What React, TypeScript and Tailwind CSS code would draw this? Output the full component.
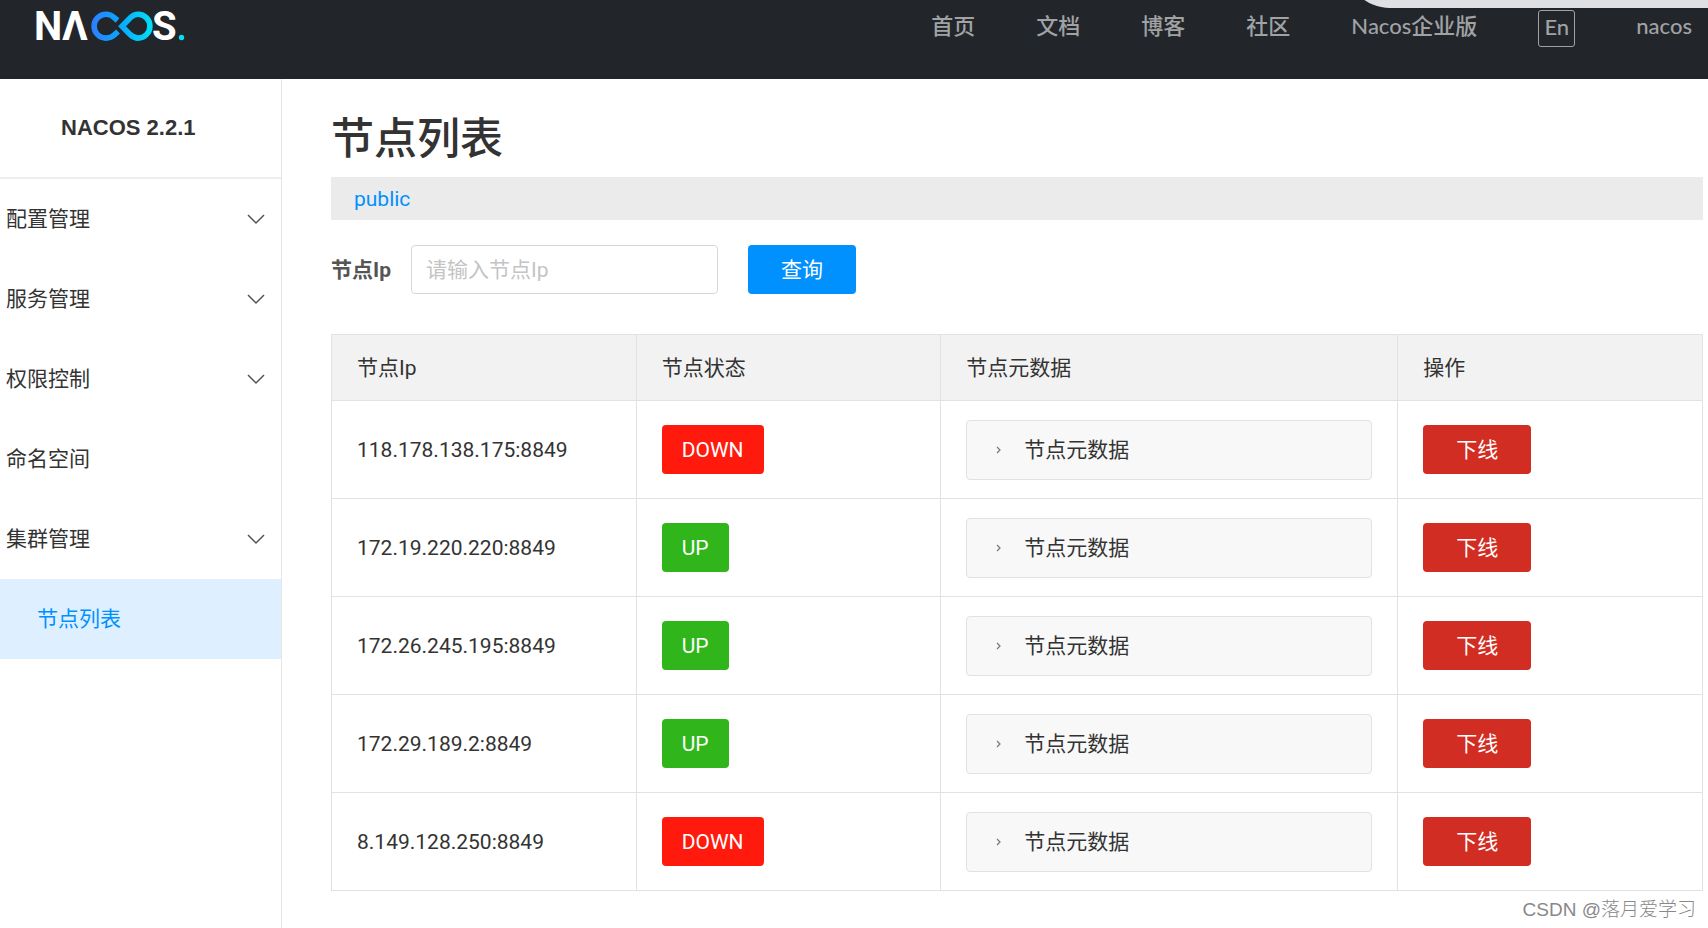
import { ReactNode, useState } from 'react'
import clsx from 'clsx'

type NodeState = 'UP' | 'DOWN'

interface ClusterNode {
	address: string
	state: NodeState
}

interface MenuItem {
	label: string
	expandable?: boolean
	children?: string[]
}

const navLinks = ['首页', '文档', '博客', '社区', 'Nacos企业版']

const menu: MenuItem[] = [
	{ label: '配置管理', expandable: true },
	{ label: '服务管理', expandable: true },
	{ label: '权限控制', expandable: true },
	{ label: '命名空间' },
	{ label: '集群管理', expandable: true, children: ['节点列表'] }
]

const nodes: ClusterNode[] = [
	{ address: '118.178.138.175:8849', state: 'DOWN' },
	{ address: '172.19.220.220:8849', state: 'UP' },
	{ address: '172.26.245.195:8849', state: 'UP' },
	{ address: '172.29.189.2:8849', state: 'UP' },
	{ address: '8.149.128.250:8849', state: 'DOWN' }
]

const Logo = () => (
	<svg width="156" height="52" viewBox="-4 -10 156 52" role="img" aria-label="Nacos">
		<defs>
			<linearGradient id="loop" gradientUnits="userSpaceOnUse" x1="55" y1="0" x2="117" y2="0">
				<stop offset="0" stopColor="#2e7dff" />
				<stop offset="0.45" stopColor="#0aa5ff" />
				<stop offset="1" stopColor="#00e1f5" />
			</linearGradient>
		</defs>
		<g fill="#fff" className="font-['Roboto',sans-serif] text-[40px] font-bold">
			<text x="-2" y="30">N</text>
			<text x="26" y="30">Λ</text>
			<text x="116" y="30">S</text>
		</g>
		<g fill="none" stroke="url(#loop)" strokeWidth="5.6">
			<path d="M81.500 10.500L78 7.500C75.500 5.200 73 4.300 70 4.300A11.900 11.900 0 0 0 70 28.100C74 28.100 76.500 26.700 78.500 24.800L82 21.500" />
			<path d="M86 16.200L94 8C97 5.200 99 4.300 102 4.300A11.900 11.900 0 0 1 102 28.100C99 28.100 97 27.200 94 24.400Z" />
		</g>
		<circle cx="145.500" cy="27.500" r="2.700" fill="#00e1f5" />
	</svg>
)

const ChevronDown = () => (
	<svg width="18" height="12" viewBox="0 0 18 12" fill="none" stroke="#555" strokeWidth="1.500">
		<path d="M1 2L9 10L17 2" />
	</svg>
)

const ChevronRight = () => (
	<svg width="6" height="8" viewBox="0 0 6 8" fill="none" stroke="#777" strokeWidth="1.200">
		<path d="M1 1L4 4L1 7" />
	</svg>
)

const Header = () => (
	<header className="relative flex h-[79px] items-start justify-between bg-[#22252a] pr-4 pl-8">
		<a href="#">
			<Logo />
		</a>
		<nav className="mt-[10px] flex items-start gap-[61px] font-['Lato','Noto_Sans_CJK_SC',sans-serif] text-[22px] leading-8 font-medium text-[#a0a2a4]">
			{navLinks.map((label) => (
				<a key={label} href="#">
					{label}
				</a>
			))}
			<button
				type="button"
				className="flex h-[37px] w-[37px] items-start justify-center rounded-[3px] border border-[#a0a2a4]"
			>
				En
			</button>
			<a href="#">nacos</a>
		</nav>
		<div className="absolute top-0 right-0 h-2 w-[363px] overflow-hidden">
			<div className="absolute bottom-0 h-12 w-full rounded-bl-[45px] bg-[#dfe0e3]" />
		</div>
	</header>
)

const Sidebar = () => (
	<aside className="w-[282px] shrink-0 border-r border-[#e6e6e6]">
		<h2 className="flex h-[100px] items-center border-b-2 border-[#eee] pl-[61px] font-['Liberation_Sans',sans-serif] text-[22px] font-bold">
			NACOS 2.2.1
		</h2>
		<ul>
			{menu.map(({ label, expandable, children }) => (
				<li key={label}>
					<button
						type="button"
						className="flex h-20 w-full items-center justify-between pr-4 pl-[6px]"
					>
						{label}
						{expandable && <ChevronDown />}
					</button>
					{children?.map((child) => (
						<a
							key={child}
							href="#"
							className="flex h-20 items-center bg-[#def0ff] pl-[37px] text-[#0091ff]"
						>
							{child}
						</a>
					))}
				</li>
			))}
		</ul>
	</aside>
)

const StateTag = ({ state }: { state: NodeState }) => (
	<span
		className={clsx(
			'inline-flex h-[49px] items-center rounded px-5 text-white',
			state === 'UP' ? 'bg-[#30b51a]' : 'bg-[#ff1a0d]'
		)}
	>
		{state}
	</span>
)

const Th = ({ className, children }: { className: string; children: ReactNode }) => (
	<th className={clsx('h-[66px] border border-[#e2e2e2] px-[25px] text-left font-normal', className)}>
		{children}
	</th>
)

const Td = ({ children }: { children: ReactNode }) => (
	<td className="h-[98px] border border-[#e2e2e2] px-[25px]">{children}</td>
)

export default function App() {
	const [ip, setIp] = useState('')

	return (
		<div className="relative flex min-h-screen flex-col bg-white font-['Roboto','Noto_Sans_CJK_SC',sans-serif] text-[21px] leading-8 text-[#333]">
			<Header />
			<div className="flex grow">
				<Sidebar />
				<main className="grow pr-[5px] pl-[49px]">
					<h1 className="pt-7 pb-[6px] text-[43px] leading-[64px] font-medium">节点列表</h1>
					<div className="flex h-[43px] items-center bg-[#ebebeb] px-[23px]">
						<a href="#" className="text-[#0091ff]">
							public
						</a>
					</div>
					<form className="mt-[25px] flex items-center" onSubmit={(e) => e.preventDefault()}>
						<label htmlFor="node-ip" className="mr-5 font-bold text-[#555]">
							节点Ip
						</label>
						<input
							id="node-ip"
							value={ip}
							onChange={(e) => setIp(e.target.value)}
							placeholder="请输入节点Ip"
							className="h-[49px] w-[307px] rounded border border-[#d8d8d8] px-[14px] placeholder:text-[#c4c4c4]"
						/>
						<button
							type="submit"
							className="ml-[30px] h-[49px] w-[108px] rounded bg-[#0091ff] text-white"
						>
							查询
						</button>
					</form>
					<table className="mt-10 w-full table-fixed border-collapse">
						<thead className="bg-[#f2f2f2]">
							<tr>
								<Th className="w-2/9">节点Ip</Th>
								<Th className="w-2/9">节点状态</Th>
								<Th className="w-3/9">节点元数据</Th>
								<Th className="w-2/9">操作</Th>
							</tr>
						</thead>
						<tbody>
							{nodes
								.filter(({ address }) => address.includes(ip))
								.map(({ address, state }) => (
									<tr key={address}>
										<Td>{address}</Td>
										<Td>
											<StateTag state={state} />
										</Td>
										<Td>
											<button
												type="button"
												className="flex h-[60px] w-full items-center gap-[22px] rounded border border-[#e2e2e2] bg-[#f8f8f8] pl-[29px]"
											>
												<ChevronRight />
												节点元数据
											</button>
										</Td>
										<Td>
											<button
												type="button"
												className="h-[49px] w-[108px] rounded bg-[#d12d22] text-white"
											>
												下线
											</button>
										</Td>
									</tr>
								))}
						</tbody>
					</table>
				</main>
			</div>
			<p className="absolute right-3 bottom-2 font-['Liberation_Sans','Noto_Sans_CJK_SC',sans-serif] text-[19px] leading-5 font-light text-[#888]">
				CSDN @落月爱学习
			</p>
		</div>
	)
}
